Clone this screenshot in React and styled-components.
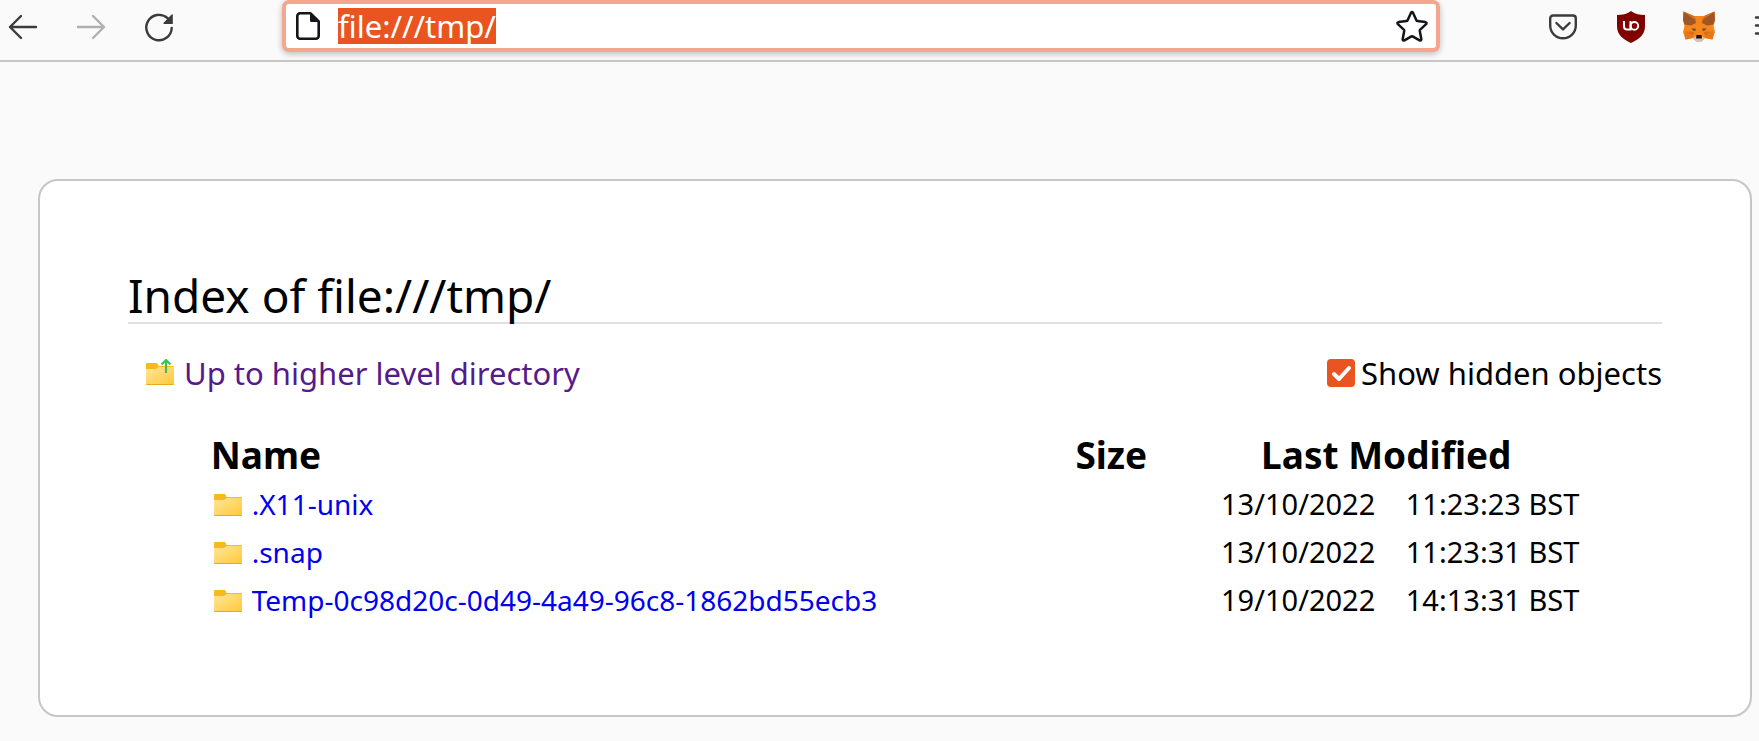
import React, { useState, useEffect, useRef } from 'react';
import styled, { createGlobalStyle } from "styled-components";

const entries = [
  { name: ".X11-unix", date: "13/10/2022", time: "11:23:23 BST" },
  { name: ".snap", date: "13/10/2022", time: "11:23:31 BST" },
  { name: "Temp-0c98d20c-0d49-4a49-96c8-1862bd55ecb3", date: "19/10/2022", time: "14:13:31 BST" },
];

const BackIcon = () => (
  <svg width="32" height="32" viewBox="0 0 32 32" fill="none" stroke="currentColor" strokeWidth="2.4" strokeLinecap="round" strokeLinejoin="round">
    <path d="M14 5 L3 16 L14 27 M3 16 H29" />
  </svg>
);

const ForwardIcon = () => (
  <svg width="32" height="32" viewBox="0 0 32 32" fill="none" stroke="currentColor" strokeWidth="2.4" strokeLinecap="round" strokeLinejoin="round">
    <path d="M18 5 L29 16 L18 27 M29 16 H3" />
  </svg>
);

const ReloadIcon = () => (
  <svg width="32" height="32" viewBox="0 0 32 32" fill="none">
    <path d="M28.7 17 A12.7 12.7 0 1 1 24.6 7.2" stroke="currentColor" strokeWidth="2.4" strokeLinecap="round" />
    <path d="M29.8 3.6 V13 H20.8 Q20 12.6 20.6 11.8 L28.6 3.6 Q29.3 3 29.8 3.6 Z" fill="currentColor" />
  </svg>
);

const PageIcon = () => (
  <svg width="24" height="28" viewBox="0 0 24 28" fill="none">
    <path d="M4 1.3 H14.6 L22.7 9.4 V24 A2.7 2.7 0 0 1 20 26.7 H4 A2.7 2.7 0 0 1 1.3 24 V4 A2.7 2.7 0 0 1 4 1.3 Z" stroke="#15141a" strokeWidth="2.6" strokeLinejoin="round" />
    <path d="M14 1 V8.5 Q14 10 15.5 10 H23 Z" fill="#15141a" />
  </svg>
);

const StarIcon = () => (
  <svg width="32" height="32" viewBox="0 0 32 32" fill="none" stroke="#15141a" strokeWidth="2.5" strokeLinejoin="round">
    <path d="M14.9 2.9 Q16 1.1 17.1 2.9 L20.5 10.4 Q20.8 11 21.5 11.1 L29.4 12.1 Q31.3 12.6 30.1 14.1 L24.2 19.7 Q23.7 20.2 23.8 20.9 L25.3 29 Q25.4 31 23.6 30.3 L16.6 26.3 Q16 26 15.4 26.3 L8.4 30.3 Q6.6 31 6.7 29 L8.2 20.9 Q8.3 20.2 7.8 19.7 L1.9 14.1 Q0.7 12.6 2.6 12.1 L10.5 11.1 Q11.2 11 11.5 10.4 Z" />
  </svg>
);

const PocketIcon = () => (
  <svg width="32" height="32" viewBox="0 0 32 32" fill="none" stroke="currentColor" strokeWidth="2.4" strokeLinecap="round" strokeLinejoin="round">
    <path d="M6 4.5 H26 A2.8 2.8 0 0 1 28.8 7.3 V14.5 A12.8 12.8 0 0 1 3.2 14.5 V7.3 A2.8 2.8 0 0 1 6 4.5 Z" />
    <path d="M9.4 12 L16 18.4 L22.6 12" />
  </svg>
);

const ShieldIcon = () => (
  <svg width="32" height="32" viewBox="0 0 32 32" fill="none">
    <path d="M16 0 C20 3 25 4 30 4 V15 C30 24 24 28 16 32 C8 28 2 24 2 15 V4 C7 4 12 3 16 0 Z" fill="#800000" />
    <path d="M9 10 V15.5 A3 3 0 0 0 12 18.5 H15.5 V10" stroke="#fff" strokeWidth="2" />
    <circle cx="19.4" cy="14.9" r="3.8" stroke="#fff" strokeWidth="2" />
  </svg>
);

const FoxIcon = () => (
  <svg width="32" height="32" viewBox="0 0 32 32">
    <path d="M0.5 0.5 L11 5 H21 L31.5 0.5 L32 9 L30.5 15 L32 21 L29.5 28.5 L22 27 L18.5 30.5 H13.5 L10 27 L2.5 28.5 L0 21 L1.5 15 L0 9 Z" fill="#f6851b" />
    <path d="M0.5 0.5 L12 7 L13 12 L8 14.5 L1.5 13.5 L0 9 Z M31.5 0.5 L20 7 L19 12 L24 14.5 L30.5 13.5 L32 9 Z" fill="#a15626" />
    <path d="M0.5 0.5 L11 5 L12.5 9 Z M31.5 0.5 L21 5 L19.5 9 Z" fill="#d9701f" />
    <path d="M1.5 20.5 L9 20 L10 27 L2.5 28.5 Z M30.5 20.5 L23 20 L22 27 L29.5 28.5 Z" fill="#e4761b" />
    <path d="M6 21 L11.5 21 L9.5 25 Z M26 21 L20.5 21 L22.5 25 Z" fill="#d86a17" />
    <path d="M8.5 17.5 L12.5 17.5 L12.5 20 L10 19.5 Z M23.5 17.5 L19.5 17.5 L19.5 20 L22 19.5 Z" fill="#6b4a33" />
    <path d="M9.5 27 L13 25.5 H19 L22.5 27 L19 30.5 H13 Z" fill="#d7c1b3" />
    <path d="M13.5 24 H18.5 L19 27.5 H13 Z" fill="#161616" />
  </svg>
);

const MenuIcon = () => (
  <svg width="32" height="32" viewBox="0 0 32 32" stroke="currentColor" strokeWidth="2.4" strokeLinecap="round">
    <path d="M5 6.5 H28 M5 14.5 H28 M5 22.5 H28" />
  </svg>
);

const FolderIcon = ({ up }) => (
  <svg width="28" height="28" viewBox="0 0 28 28" fill="none">
    <defs>
      <linearGradient id="folder" x1="0" y1="0" x2="1" y2="1">
        <stop offset="0" stopColor="#ffe69c" />
        <stop offset="1" stopColor="#ffc937" />
      </linearGradient>
    </defs>
    <path d="M0 5 Q0 4 1 4 H10 Q12 4 12.5 7 H27 Q28 7 28 8 V12 H0 Z" fill="#fbb917" />
    <path d="M0 10 H9 Q11 10 12.5 8 H28 V25 Q28 26 27 26 H1 Q0 26 0 25 Z" fill="url(#folder)" />
    <path d="M0 25 Q0 26 1 26 H27 Q28 26 28 25 Z" fill="#e8a820" />
    {up && <path d="M20 14 V1 M15.5 5.5 L20 1 L24.5 5.5" stroke="#3cc453" strokeWidth="2.2" />}
  </svg>
);

export default function App() {
  const [showHidden, setShowHidden] = useState(true);
  const [url, setUrl] = useState("file:///tmp/");
  const urlRef = useRef();
  useEffect(() => {
    urlRef.current?.focus();
    urlRef.current?.select();
  }, []);
  const visible = entries.filter((entry) => showHidden || !entry.name.startsWith("."));
  return (<>
    <GlobalStyle />
    <Toolbar>
      <ButtonGroup>
        <ToolButton aria-label="Back"><BackIcon /></ToolButton>
        <ToolButton aria-label="Forward" disabled><ForwardIcon /></ToolButton>
        <ToolButton aria-label="Reload"><ReloadIcon /></ToolButton>
      </ButtonGroup>
      <UrlBar>
        <PageIcon />
        <UrlInput ref={urlRef} aria-label="Address" spellCheck={false} value={url} onChange={(e) => setUrl(e.target.value)} />
        <ToolButton aria-label="Bookmark this page"><StarIcon /></ToolButton>
      </UrlBar>
      <ButtonGroup>
        <ToolButton aria-label="Save to Pocket"><PocketIcon /></ToolButton>
        <ToolButton aria-label="uBlock Origin"><ShieldIcon /></ToolButton>
        <ToolButton aria-label="MetaMask"><FoxIcon /></ToolButton>
        <MenuButton aria-label="Menu"><MenuIcon /></MenuButton>
      </ButtonGroup>
    </Toolbar>
    <Card>
      <Title>Index of file:///tmp/</Title>
      <Controls>
        <UpLink href="#up"><FolderIcon up />Up to higher level directory</UpLink>
        <HiddenLabel>
          <Checkbox type="checkbox" checked={showHidden} onChange={(e) => setShowHidden(e.target.checked)} />
          Show hidden objects
        </HiddenLabel>
      </Controls>
      <Listing>
        <colgroup>
          <col />
          <SizeCol />
          <DateCol />
          <TimeCol />
        </colgroup>
        <thead>
          <tr>
            <HeadCell $align="left">Name</HeadCell>
            <HeadCell>Size</HeadCell>
            <HeadCell colSpan="2">Last Modified</HeadCell>
          </tr>
        </thead>
        <tbody>
          {visible.map((entry) => (
            <tr key={entry.name}>
              <Cell><FileLink href={`#${entry.name}`}><FolderIcon />{entry.name}</FileLink></Cell>
              <Cell />
              <DateCell>{entry.date}</DateCell>
              <DateCell>{entry.time}</DateCell>
            </tr>
          ))}
        </tbody>
      </Listing>
    </Card>
  </>);
}

const GlobalStyle = createGlobalStyle`
  * {
    box-sizing: border-box;
  }
  body {
    margin: 0;
    background: #fafafa;
    color: #000;
    font-family: "Noto Sans", "Open Sans", sans-serif;
  }
  svg {
    display: block;
    flex: none;
  }
`;

const Toolbar = styled.header`
  display: flex;
  align-items: flex-start;
  gap: 107px;
  height: 62px;
  padding-left: 7px;
  border-bottom: 2px solid #c6c6c6;
`;

const ButtonGroup = styled.div`
  display: flex;
  align-items: center;
  gap: 36px;
  height: 54px;
`;

const ToolButton = styled.button`
  flex: none;
  padding: 0;
  border: none;
  background: none;
  color: #3b3b3d;
  &:disabled {
    color: #b0b0b1;
  }
`;

const MenuButton = styled(ToolButton)`
  width: 8px;
  overflow: hidden;
`;

const UrlBar = styled.div`
  display: flex;
  align-items: center;
  flex: 1;
  height: 52px;
  padding: 0 8px 0 10px;
  border: 4px solid #f5a68e;
  border-radius: 7px;
  background: #fff;
  box-shadow: 0 2px 6px rgba(0, 0, 0, 0.25);
`;

const UrlInput = styled.input`
  flex: 1;
  min-width: 0;
  height: 36px;
  margin-left: 18px;
  padding: 0;
  border: none;
  outline: none;
  background: none;
  color: #15141a;
  font-family: inherit;
  font-size: 31px;
  line-height: 36px;
  &::selection {
    background: #e95420;
    color: #fff;
  }
`;

const Card = styled.main`
  margin: 117px 7px 24px 38px;
  padding: 88px 88px 91px;
  border: 2px solid #c6c6c6;
  border-radius: 20px;
  background: #fff;
`;

const Title = styled.h1`
  margin: 0 0 29px;
  border-bottom: 2px solid #e1e1e1;
  font-size: 46px;
  font-weight: 400;
  line-height: 53px;
`;

const Controls = styled.div`
  display: flex;
  justify-content: space-between;
  align-items: center;
  margin-bottom: 37px;
  padding-left: 18px;
  font-size: 31px;
  line-height: 40px;
`;

const UpLink = styled.a`
  display: flex;
  align-items: center;
  gap: 10px;
  color: #551a8b;
  text-decoration: none;
`;

const HiddenLabel = styled.label`
  display: flex;
  align-items: center;
  gap: 6px;
`;

const Checkbox = styled.input`
  appearance: none;
  width: 28px;
  height: 28px;
  margin: 0;
  border: 2px solid #8f8f9d;
  border-radius: 4px;
  background: #fff;
  &:checked {
    border-color: #e95420;
    background: #e95420 url("data:image/svg+xml,%3Csvg xmlns='http://www.w3.org/2000/svg' viewBox='0 0 24 24' fill='none' stroke='white' stroke-width='4' stroke-linecap='round' stroke-linejoin='round'%3E%3Cpath d='M5 13 L10 18 L20 7'/%3E%3C/svg%3E") center / 24px no-repeat;
  }
`;

const Listing = styled.table`
  width: 90%;
  margin: 0 auto;
  border-collapse: collapse;
  table-layout: fixed;
`;

const SizeCol = styled.col`
  width: 152px;
`;

const DateCol = styled.col`
  width: 194px;
`;

const TimeCol = styled.col`
  width: 204px;
`;

const HeadCell = styled.th`
  height: 50px;
  padding: 0 6px;
  font-size: 37px;
  line-height: 48px;
  text-align: ${({ $align }) => $align || "center"};
`;

const Cell = styled.td`
  height: 48px;
  padding: 0 6px;
  font-size: 28px;
  line-height: 48px;
  white-space: nowrap;
`;

const DateCell = styled(Cell)`
  font-size: 29px;
  text-align: right;
`;

const FileLink = styled.a`
  display: flex;
  align-items: center;
  gap: 10px;
  padding-left: 3px;
  color: #0000ee;
  text-decoration: none;
`;
